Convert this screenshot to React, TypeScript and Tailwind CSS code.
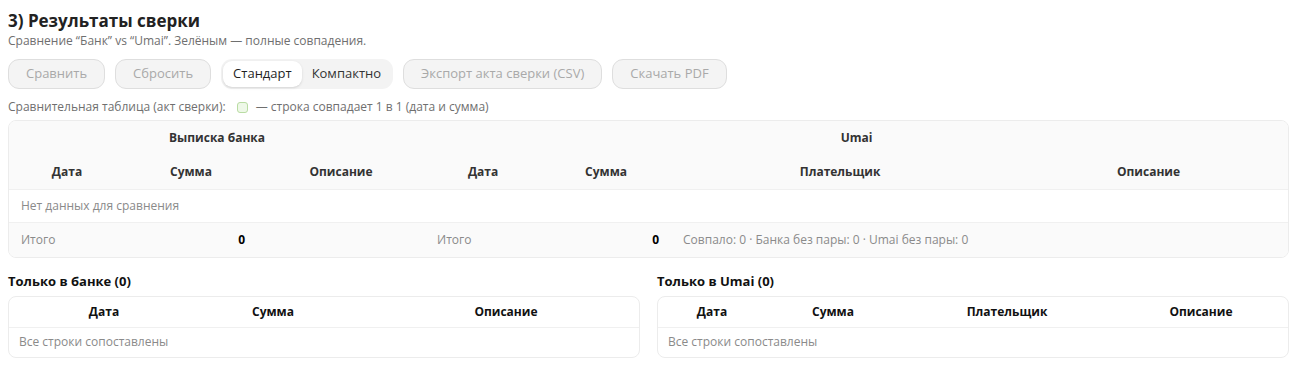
import React from 'react'

const font = { fontFamily: '"Open Sans", "Noto Sans", sans-serif' }

function Btn({ children }: { children: React.ReactNode }) {
  return (
    <button
      disabled
      className="h-[30px] px-[17px] rounded-[11px] border border-[#dedede] bg-[#f4f4f4] text-[13px] text-[#a9a9a9]"
    >
      {children}
    </button>
  )
}

export default function App() {
  return (
    <div className="bg-white text-[#222] px-2 pt-[10px]" style={font}>
      <h3 className="text-[17px] font-bold leading-[22px]">3) Результаты сверки</h3>
      <p className="text-[12px] text-[#6f6f6f] leading-[18px]">
        Сравнение “Банк” vs “Umai”. Зелёным — полные совпадения.
      </p>

      <div className="flex items-center gap-[10px] mt-[9px]">
        <Btn>Сравнить</Btn>
        <Btn>Сбросить</Btn>
        <div className="flex items-center h-[30px] p-[2px] rounded-[11px] bg-[#f3f3f3]">
          <span className="h-[26px] px-[10px] flex items-center rounded-[9px] bg-white shadow-sm text-[13px] text-[#1f1f1f]">
            Стандарт
          </span>
          <span className="h-[26px] px-[10px] flex items-center text-[13px] text-[#333]">Компактно</span>
        </div>
        <Btn>Экспорт акта сверки (CSV)</Btn>
        <Btn>Скачать PDF</Btn>
      </div>

      <div className="flex items-center mt-[9px] text-[12px] text-[#6f6f6f] leading-[18px]">
        <span>Сравнительная таблица (акт сверки):</span>
        <span className="inline-block w-[11px] h-[11px] rounded-[3px] border border-[#b9dca3] bg-[#eef8e8] ml-[11px] mr-[8px]" />
        <span>— строка совпадает 1 в 1 (дата и сумма)</span>
      </div>

      <div className="mt-[4px] border border-[#ececec] rounded-[8px] overflow-hidden w-[1281px]">
        <table className="w-full table-fixed border-collapse text-[12px]">
          <colgroup>
            <col className="w-[116px]" />
            <col className="w-[132px]" />
            <col className="w-[168px]" />
            <col className="w-[116px]" />
            <col className="w-[130px]" />
            <col className="w-[338px]" />
            <col />
          </colgroup>
          <thead className="bg-[#fafafa] text-[#333] font-bold">
            <tr className="h-[34px]">
              <th colSpan={3} className="text-center">Выписка банка</th>
              <th colSpan={4} className="text-center">Umai</th>
            </tr>
            <tr className="h-[34px]">
              <th>Дата</th>
              <th>Сумма</th>
              <th>Описание</th>
              <th>Дата</th>
              <th>Сумма</th>
              <th>Плательщик</th>
              <th>Описание</th>
            </tr>
          </thead>
          <tbody>
            <tr className="h-[33px] border-t border-[#f0f0f0]">
              <td colSpan={7} className="px-3 text-[#8a8a8a]">Нет данных для сравнения</td>
            </tr>
          </tbody>
          <tfoot className="bg-[#fafafa]">
            <tr className="h-[35px] border-t border-[#f0f0f0]">
              <td className="px-3 text-[#8a8a8a]">Итого</td>
              <td className="px-3 text-right font-bold text-black">0</td>
              <td />
              <td className="px-3 text-[#8a8a8a]">Итого</td>
              <td className="px-3 text-right font-bold text-black">0</td>
              <td colSpan={2} className="px-3 text-[#8a8a8a]">
                Совпало: 0 · Банка без пары: 0 · Umai без пары: 0
              </td>
            </tr>
          </tfoot>
        </table>
      </div>

      <div className="grid grid-cols-2 gap-[17px] mt-[14px] w-[1281px]">
        <div>
          <div className="text-[13px] font-bold leading-[18px] mb-[6px] text-[#111]">Только в банке (0)</div>
          <div className="border border-[#ececec] rounded-[8px] overflow-hidden">
            <table className="w-full table-fixed border-collapse text-[12px]">
              <colgroup>
                <col className="w-[190px]" />
                <col className="w-[148px]" />
                <col />
              </colgroup>
              <thead className="text-[#111] font-bold">
                <tr className="h-[30px]">
                  <th>Дата</th>
                  <th>Сумма</th>
                  <th className="pl-[26px]">Описание</th>
                </tr>
              </thead>
              <tbody>
                <tr className="h-[30px] border-t border-[#f0f0f0]">
                  <td colSpan={3} className="px-[10px] text-[#8a8a8a]">Все строки сопоставлены</td>
                </tr>
              </tbody>
            </table>
          </div>
        </div>
        <div>
          <div className="text-[13px] font-bold leading-[18px] mb-[6px] text-[#111]">Только в Umai (0)</div>
          <div className="border border-[#ececec] rounded-[8px] overflow-hidden">
            <table className="w-full table-fixed border-collapse text-[12px]">
              <colgroup>
                <col className="w-[108px]" />
                <col className="w-[134px]" />
                <col className="w-[214px]" />
                <col />
              </colgroup>
              <thead className="text-[#111] font-bold">
                <tr className="h-[30px]">
                  <th>Дата</th>
                  <th>Сумма</th>
                  <th>Плательщик</th>
                  <th>Описание</th>
                </tr>
              </thead>
              <tbody>
                <tr className="h-[30px] border-t border-[#f0f0f0]">
                  <td colSpan={4} className="px-[10px] text-[#8a8a8a]">Все строки сопоставлены</td>
                </tr>
              </tbody>
            </table>
          </div>
        </div>
      </div>
    </div>
  )
}
